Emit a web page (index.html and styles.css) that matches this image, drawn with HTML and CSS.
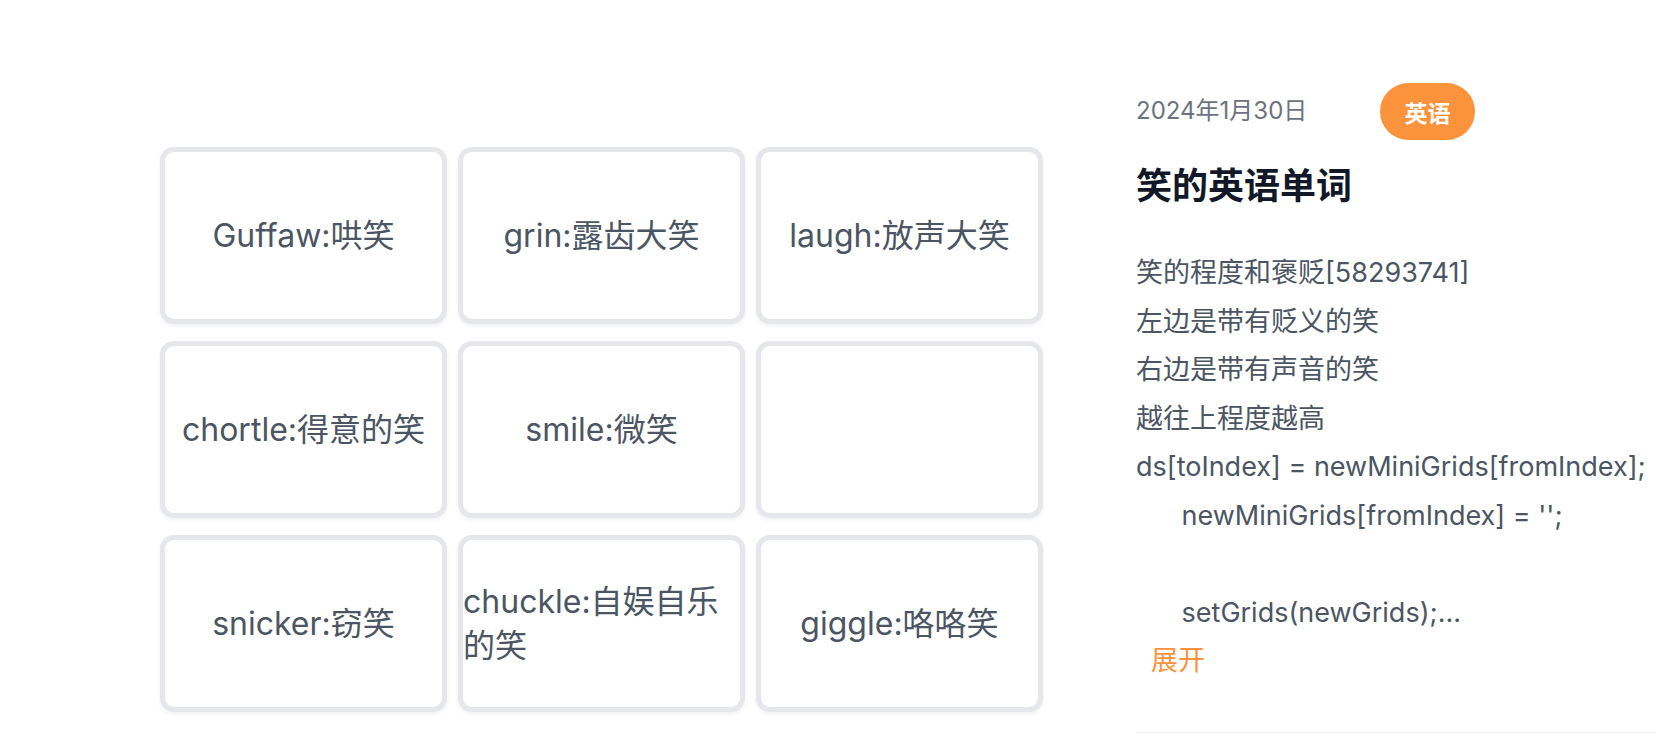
FILE: index.html
```html
<!DOCTYPE html>
<html lang="zh-CN">
<head>
<meta charset="utf-8">
<title>笑的英语单词</title>
<link rel="stylesheet" href="styles.css">
</head>
<body>
<main class="page">
  <section class="board">
    <div class="cell"><div class="word">Guffaw:哄笑</div></div>
    <div class="cell"><div class="word">grin:露齿大笑</div></div>
    <div class="cell"><div class="word">laugh:放声大笑</div></div>
    <div class="cell"><div class="word">chortle:得意的笑</div></div>
    <div class="cell"><div class="word">smile:微笑</div></div>
    <div class="cell"></div>
    <div class="cell"><div class="word">snicker:窃笑</div></div>
    <div class="cell"><div class="word">chuckle:自娱自乐的笑</div></div>
    <div class="cell"><div class="word">giggle:咯咯笑</div></div>
  </section>
  <aside class="panel">
    <div class="meta">
      <span class="date">2024年1月30日</span>
      <span class="tag">英语</span>
    </div>
    <h1 class="title">笑的英语单词</h1>
    <div class="content">笑的程度和褒贬[58293741]
左边是带有贬义的笑
右边是带有声音的笑
越往上程度越高
ds[toIndex] = newMiniGrids[fromIndex];
      newMiniGrids[fromIndex] = '';

      setGrids(newGrids);...</div>
    <div class="more">展开</div>
    <div class="rule"></div>
  </aside>
</main>
</body>
</html>
```
FILE: styles.css
```css
html, body {
  margin: 0;
  padding: 0;
  background: #ffffff;
  overflow: hidden;
}

body {
  font-family: Inter, "Noto Sans CJK SC", sans-serif;
  font-optical-sizing: none;
  font-variation-settings: "opsz" 14;
  width: 1656px;
  height: 748px;
}

.page {
  display: flex;
  align-items: flex-start;
  padding-left: 160px;
  gap: 93px;
}

.board {
  margin-top: 147px;
  display: grid;
  grid-template-columns: repeat(3, 287px);
  grid-auto-rows: 177px;
  column-gap: 11px;
  row-gap: 17px;
  flex: none;
}

.cell {
  box-sizing: border-box;
  border: 5px solid #e5e7eb;
  border-radius: 14px;
  background: #ffffff;
  box-shadow: 0 2px 4px rgba(0, 0, 0, 0.06);
  display: flex;
  align-items: center;
  justify-content: center;
}

.word {
  font-size: 32px;
  line-height: 44px;
  color: #4b5563;
}

.panel {
  flex: none;
  width: 600px;
  padding-top: 83px;
}

.meta {
  display: flex;
  align-items: center;
  height: 57px;
}

.date {
  width: 244px;
  font-size: 24px;
  color: #6b7280;
  padding-bottom: 6px;
}

.tag {
  box-sizing: border-box;
  width: 95px;
  height: 57px;
  border-radius: 29px;
  background: #fb923c;
  color: #ffffff;
  font-size: 23px;
  font-weight: 700;
  display: flex;
  align-items: center;
  justify-content: center;
}

.title {
  margin: 24px 0 0;
  font-size: 36px;
  line-height: 44px;
  font-weight: 700;
  color: #111827;
}

.content {
  margin-top: 41px;
  font-size: 27px;
  line-height: 48.5px;
  color: #4b5563;
  white-space: pre;
}

.more {
  margin-left: 15px;
  font-size: 27px;
  line-height: 48.5px;
  color: #fb923c;
}

.rule {
  margin-top: 46px;
  width: 600px;
  border-top: 1px solid #f3f4f6;
}
```
